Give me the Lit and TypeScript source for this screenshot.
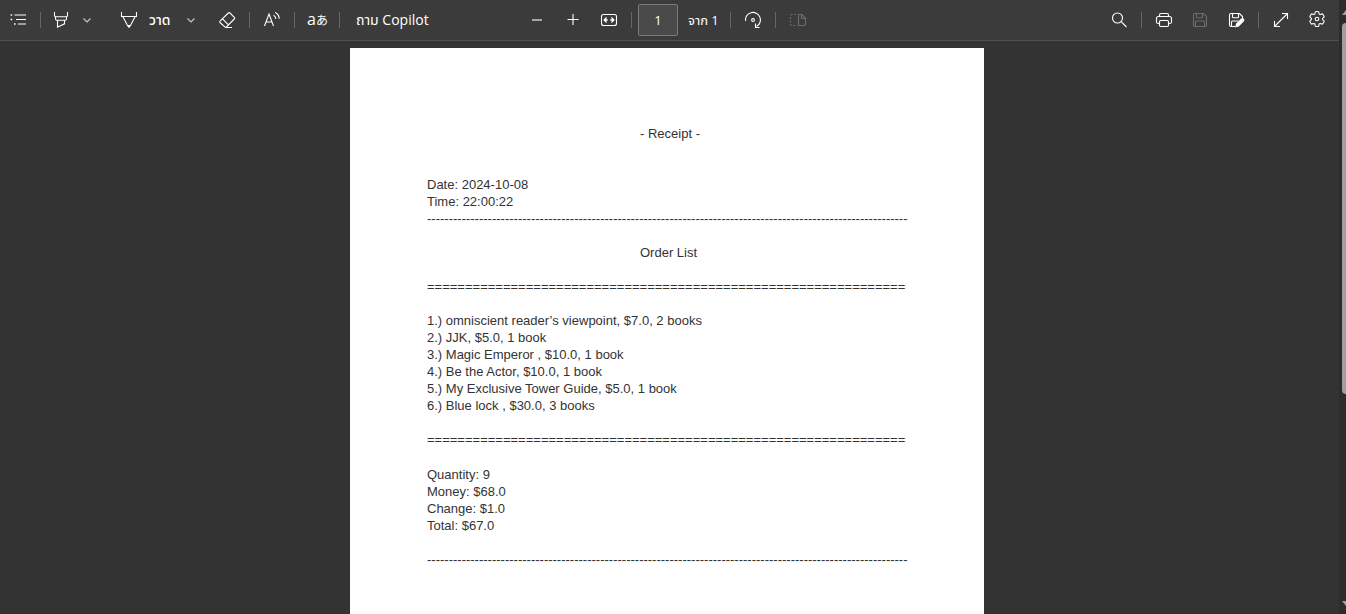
import { LitElement, html, css, svg, nothing, type TemplateResult } from "lit";
import { customElement } from "lit/decorators.js";

const icons: Record<string, TemplateResult> = {
  contents: svg`<path d="M6.5 5h11.5M8 9.5h10M10 14h8"/><path stroke-width="1.6" d="M2.6 5h1.6M2.6 9.5h1.6M6 14h1.6"/>`,
  highlight: svg`<path d="M3.5 2v3.500c0 .8.400 1.200 1.200 1.200h10.600c.8 0 1.200-.4 1.200-1.200V2M4.500 6.700v2.100c0 1 .5 1.500 1.500 1.500h8c1 0 1.500-.5 1.500-1.500V6.700M6.500 10.300v6.900l7-3.400v-3.500"/>`,
  pen: svg`<path d="M2.500 2v4.500h15V2M3.800 6.500l4.700 9 1.500 1.700 1.500-1.700 4.700-9"/><path fill="currentColor" d="M9 15.500h2L10 17z"/>`,
  eraser: svg`<path d="M3 11.200 11.300 3c.5-.5 1.200-.5 1.700 0l4.300 4.300c.5.5.5 1.200 0 1.700L9.500 16.800c-.5.5-1.200.5-1.700 0L3 12.500c-.4-.4-.4-.9 0-1.300zM5.500 8.800l6 6M8.500 17.500H15"/>`,
  read: svg`<path d="M2.500 16 7 4l4.500 12M4 12h6M11.500 5.200c1.300.6 2.300 2 2.300 3.800M13.200 2.500c2.400 1.200 4 3.400 4 6.300"/>`,
  minus: svg`<path d="M5 10h10"/>`,
  plus: svg`<path d="M4.500 9.500h11M10 4v11"/>`,
  fit: svg`<rect x="2.500" y="4.500" width="15" height="11" rx="2"/><path d="M5 10h4M11 10h4"/><path fill="currentColor" d="M7 8 5 10l2 2zM13 8l2 2-2 2z"/>`,
  rotate: svg`<path d="M2.500 11A7.500 7.500 0 1 1 13.500 16.500M12.500 13.500v4h4"/><circle cx="10" cy="10" r="1.400"/>`,
  pages: svg`<path d="M10.500 4.500H14l3.500 3.500v6c0 1-.5 1.500-1.500 1.500h-5.500zM13.500 4.500v4h4"/><path stroke-dasharray="2 1.500" d="M8 4.500H4c-1 0-1.500.5-1.500 1.500v8c0 1 .5 1.500 1.500 1.500h4"/>`,
  search: svg`<circle cx="8.500" cy="8" r="5"/><path d="m12.200 11.700 5.300 5.300"/>`,
  print: svg`<path d="M5.500 6.500V5c0-1 .5-1.500 1.500-1.500h6c1 0 1.500.5 1.500 1.500v1.500M5.500 13.500h-1c-1 0-2-.6-2-1.600V8.500c0-1.200.8-2 2-2h11c1.200 0 2 .8 2 2v3.400c0 1-1 1.600-2 1.600h-1"/><rect x="5.500" y="10.500" width="9" height="6" rx="1.200"/>`,
  save: svg`<path d="M5 3.500h8.500l3 3V15c0 1-.5 1.500-1.500 1.500H5c-1 0-1.500-.5-1.500-1.500V5c0-1 .5-1.500 1.500-1.500zM6.500 3.500V7c0 .5.300.8.800.8h4.400c.5 0 .8-.3.8-.8V3.500M5.500 16.500V12c0-.6.400-1 1-1h7c.6 0 1 .4 1 1v4.500"/>`,
  saveas: svg`<path d="M9 16.500H5c-1 0-1.500-.5-1.500-1.500V5c0-1 .5-1.500 1.500-1.500h8.500l3 3V8M6.500 3.500V7c0 .5.300.8.800.8h4.400c.5 0 .8-.3.800-.8V3.500M5.500 16.500V12c0-.6.400-1 1-1h6"/><path fill="currentColor" d="m10.500 14 5-5c1.500-1 3 .5 2 2l-5 5-2.700.8z"/>`,
  expand: svg`<path d="M3.500 16.500l13-13M11 3.500h5.500V9M3.500 11v5.500H9"/>`,
  settings: svg`<circle cx="10" cy="9" r="1.800"/><path stroke-linejoin="round" d="M8.400 1.700Q10 1.300 11.600 1.700L12.100 3.900 13.200 4.500 15.400 3.900Q16.800 5.200 17.200 6.900L15.600 8.400V9.600L17.200 11.100Q16.800 12.800 15.400 14.100L13.200 13.500 12.100 14.100 11.600 16.300Q10 16.700 8.400 16.300L7.900 14.100 6.800 13.500 4.600 14.100Q3.200 12.800 2.800 11.100L4.400 9.600V8.400L2.800 6.900Q3.200 5.200 4.600 3.900L6.800 4.500 7.900 3.900Z"/>`,
};

const books: Array<[string, string, string]> = [
  ["omniscient reader’s viewpoint", "$7.0", "2 books"],
  ["JJK", "$5.0", "1 book"],
  ["Magic Emperor ", "$10.0", "1 book"],
  ["Be the Actor", "$10.0", "1 book"],
  ["My Exclusive Tower Guide", "$5.0", "1 book"],
  ["Blue lock ", "$30.0", "3 books"],
];

const totals = ["Quantity: 9", "Money: $68.0", "Change: $1.0", "Total: $67.0"];

@customElement("pdf-toolbar")
export class PdfToolbar extends LitElement {
  static styles = css`
    :host {
      display: grid;
      grid-template-columns: 1fr auto 1fr;
      align-items: center;
      height: 40px;
      background: #3b3b3b;
      border-bottom: 1px solid #515151;
      color: #fff;
      font: 14px/20px "Open Sans", "Noto Sans", "Noto Sans Thai", sans-serif;
    }
    .group { display: flex; align-items: center; }
    .left { padding-left: 8px; }
    .center { padding-right: 4px; }
    .right { justify-content: flex-end; gap: 16px; padding-right: 12px; }
    button {
      display: flex;
      align-items: center;
      flex: none;
      padding: 0;
      border: 0;
      background: none;
      color: inherit;
      font: inherit;
      white-space: nowrap;
    }
    button:disabled { color: #6c6c6c; }
    svg { display: block; fill: none; stroke: currentColor; stroke-width: 1.1; }
    .sep { flex: none; width: 1px; height: 16px; margin: 0 12px; background: #666; }
    .right .sep { margin: 0 -4px; }
    .center .tight { margin-right: 6px; }
    .highlight { margin-left: -2px; }
    .chevron { color: #c8c8c8; margin-left: 11px; }
    .draw { gap: 10px; margin-left: 27px; width: 56px; }
    .erase { margin-left: 21px; }
    .translate { align-items: baseline; width: 20px; font: 16px/20px "Open Sans", "Noto Sans CJK JP", sans-serif; }
    .small { font-size: 12px; }
    .copilot { margin-left: 4px; }
    .zoom { margin-right: 16px; }
    .page {
      box-sizing: border-box;
      width: 40px;
      height: 32px;
      padding: 0;
      border: 1px solid #7b7b7b;
      border-radius: 2px;
      background: #4a4a4a;
      color: #fff;
      font: inherit;
      font-size: 13px;
      text-align: center;
    }
    .count { width: 30px; margin-left: 10px; white-space: nowrap; }
    .label { font-size: 13px; }
    .draw .label { font-size: 14px; font-weight: 500; }
  `;

  private icon(name: string) {
    return html`<svg width="20" height="20" viewBox="0 0 20 20" aria-hidden="true">${icons[name]}</svg>`;
  }

  private button(name: string, label: string, cls = "", disabled = false) {
    return html`<button class=${cls || nothing} aria-label=${label} ?disabled=${disabled}>${this.icon(name)}</button>`;
  }

  private chevron(label: string) {
    return html`<button class="chevron" aria-label=${label}>
      <svg width="10" height="10" viewBox="0 0 10 10" aria-hidden="true"><path d="m1.500 3.500 3.500 3.500 3.500-3.500" /></svg>
    </button>`;
  }

  render() {
    const sep = html`<span class="sep"></span>`;
    return html`
      <div class="group left">
        ${this.button("contents", "Contents")}${sep}
        ${this.button("highlight", "Highlight", "highlight")}${this.chevron("Highlight colours")}
        <button class="draw">${this.icon("pen")}<span class="label">วาด</span></button>
        ${this.chevron("Pen options")}
        ${this.button("eraser", "Erase", "erase")}${sep}
        ${this.button("read", "Read aloud")}${sep}
        <button class="translate" aria-label="Translate">a<span class="small">あ</span></button>${sep}
        <button class="copilot">ถาม Copilot</button>
      </div>
      <div class="group center">
        ${this.button("minus", "Zoom out", "zoom")}
        ${this.button("plus", "Zoom in", "zoom")}
        ${this.button("fit", "Fit to width")}<span class="sep tight"></span>
        <input class="page" type="text" aria-label="Page" .value=${"1"} />
        <span class="count label">จาก 1</span>${sep}
        ${this.button("rotate", "Rotate")}${sep}
        ${this.button("pages", "Page view", "", true)}
      </div>
      <div class="group right">
        ${this.button("search", "Search")}${sep}
        ${this.button("print", "Print")}
        ${this.button("save", "Save", "", true)}
        ${this.button("saveas", "Save as")}${sep}
        ${this.button("expand", "Full screen")}
        ${this.button("settings", "Settings")}
      </div>
    `;
  }
}

@customElement("receipt-page")
export class ReceiptPage extends LitElement {
  static styles = css`
    :host {
      display: block;
      box-sizing: border-box;
      width: 100%;
      max-width: 634px;
      min-height: 897px;
      padding: 77px 76px 77px 77px;
      background: #fff;
      color: #333;
      font: 13px/17px "Liberation Sans", Arial, sans-serif;
    }
    h1, h2, p, ol { margin: 0; padding: 0; font: inherit; }
    h1, h2 { padding-left: 213px; }
    h1 { margin-bottom: 34px; }
    ol { list-style: none; }
    .rule { overflow: hidden; white-space: nowrap; }
    .gap { margin: 17px 0; }
    .after { margin-top: 17px; }
    .totals { padding-top: 1px; }
  `;

  render() {
    const line = (char: string, cls: string) =>
      html`<div class="rule ${cls}" aria-hidden="true">${char.repeat(char === "-" ? 111 : 63)}</div>`;
    return html`
      <h1>- Receipt -</h1>
      <p>Date: 2024-10-08</p>
      <p>Time: 22:00:22</p>
      ${line("-", "")}
      <h2 class="after">Order List</h2>
      ${line("=", "gap")}
      <ol>
        ${books.map(([title, price, count], i) => html`<li>${i + 1}.) ${title}, ${price}, ${count}</li>`)}
      </ol>
      ${line("=", "gap")}
      <div class="totals">${totals.map((t) => html`<p>${t}</p>`)}</div>
      ${line("-", "gap")}
    `;
  }
}

@customElement("app-root")
export class AppRoot extends LitElement {
  static styles = css`
    :host {
      display: grid;
      grid-template-columns: minmax(0, 1fr) 7px;
      height: 100vh;
      overflow: hidden;
      background: #333;
    }
    .viewer { display: flex; flex-direction: column; min-height: 0; }
    main {
      flex: 1;
      display: flex;
      justify-content: center;
      align-items: flex-start;
      min-height: 0;
      overflow: hidden;
      padding: 7px 5px 0 0;
    }
    .scrollbar {
      display: flex;
      flex-direction: column;
      overflow: hidden;
      padding: 10px 0 8px 3px;
      background: #2c2c2c;
    }
    .arrow { flex: none; width: 8px; height: 5px; background: #9f9f9f; }
    .up { clip-path: polygon(50% 0, 100% 100%, 0 100%); }
    .down { clip-path: polygon(0 0, 100% 0, 50% 100%); }
    .track { flex: 1; margin: 8px 0; }
    .thumb { width: 8px; height: 65%; border-radius: 4px; background: #9f9f9f; }
  `;

  render() {
    return html`
      <div class="viewer">
        <pdf-toolbar></pdf-toolbar>
        <main><receipt-page></receipt-page></main>
      </div>
      <div class="scrollbar" aria-hidden="true">
        <div class="arrow up"></div>
        <div class="track"><div class="thumb"></div></div>
        <div class="arrow down"></div>
      </div>
    `;
  }
}
